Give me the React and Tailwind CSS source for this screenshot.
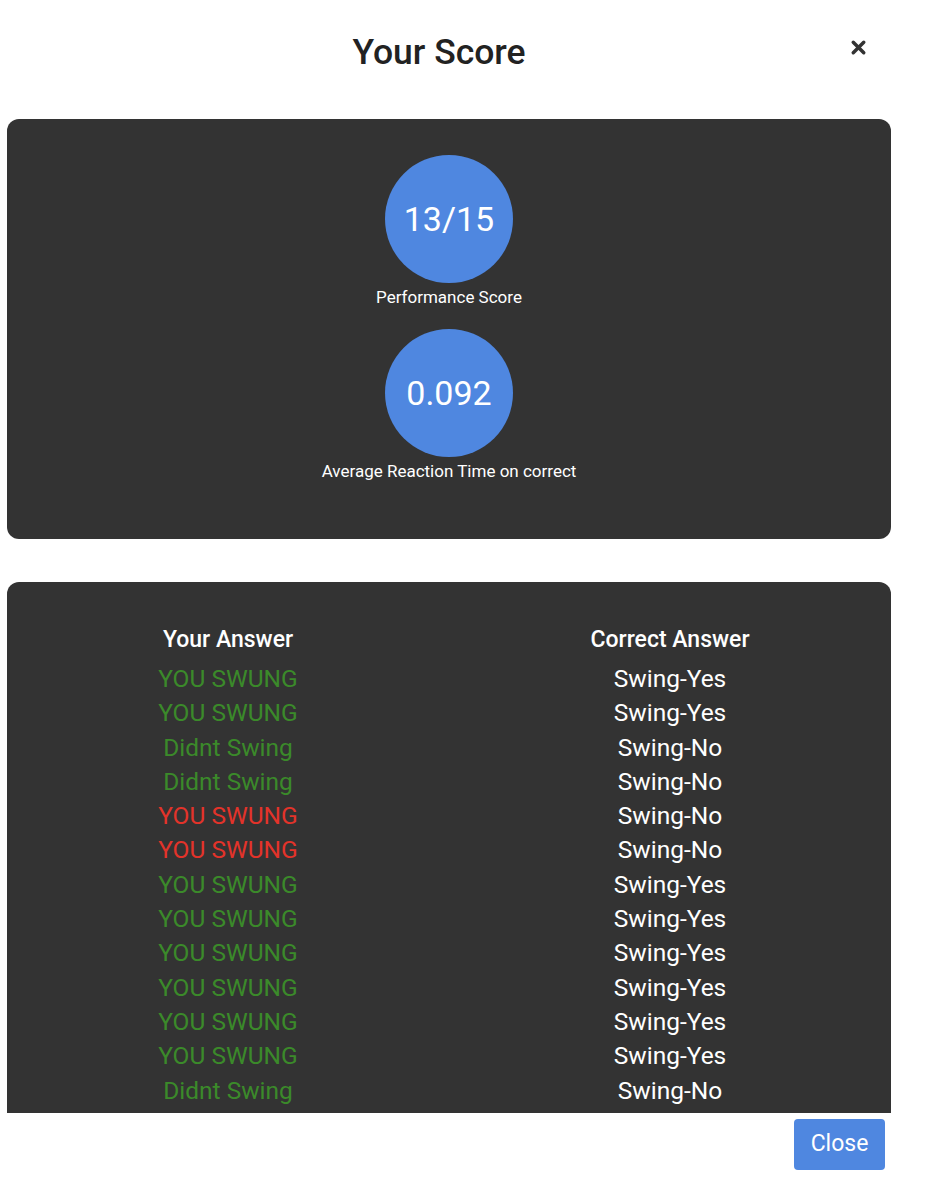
import { X } from 'lucide-react'

const rows = [
  { you: 'YOU SWUNG', ok: true, correct: 'Swing-Yes' },
  { you: 'YOU SWUNG', ok: true, correct: 'Swing-Yes' },
  { you: 'Didnt Swing', ok: true, correct: 'Swing-No' },
  { you: 'Didnt Swing', ok: true, correct: 'Swing-No' },
  { you: 'YOU SWUNG', ok: false, correct: 'Swing-No' },
  { you: 'YOU SWUNG', ok: false, correct: 'Swing-No' },
  { you: 'YOU SWUNG', ok: true, correct: 'Swing-Yes' },
  { you: 'YOU SWUNG', ok: true, correct: 'Swing-Yes' },
  { you: 'YOU SWUNG', ok: true, correct: 'Swing-Yes' },
  { you: 'YOU SWUNG', ok: true, correct: 'Swing-Yes' },
  { you: 'YOU SWUNG', ok: true, correct: 'Swing-Yes' },
  { you: 'YOU SWUNG', ok: true, correct: 'Swing-Yes' },
  { you: 'Didnt Swing', ok: true, correct: 'Swing-No' },
  { you: 'Didnt Swing', ok: true, correct: 'Swing-No' },
  { you: 'YOU SWUNG', ok: true, correct: 'Swing-Yes' },
]

const Stat = ({ value, label }) => (
  <div className="flex flex-col items-center">
    <div className="w-32 h-32 rounded-full bg-[#4f87e0] flex items-center justify-center text-white text-[34px]">
      {value}
    </div>
    <span className="mt-[2px] text-white text-[17px] leading-6">{label}</span>
  </div>
)

export default function App() {
  return (
    <div className="w-[925px] h-[1200px] bg-white font-['Roboto',sans-serif] flex flex-col">
      {/* Header */}
      <div className="h-[95px] relative flex items-center justify-center pt-[10px]">
        <h1 className="text-[35.5px] font-medium text-[#222] ml-[-47px]">Your Score</h1>
        <button className="absolute right-[56px] top-[37px] text-[#333]">
          <X size={21} strokeWidth={4} />
        </button>
      </div>

      {/* Body */}
      <div className="h-[1018px] overflow-hidden pt-6 pl-[7px] pr-[34px] flex flex-col gap-[43px]">
        <div className="h-[420px] shrink-0 rounded-xl bg-[#333333] pt-[36px] flex flex-col items-center gap-[20px]">
          <Stat value="13/15" label="Performance Score" />
          <Stat value="0.092" label="Average Reaction Time on correct" />
        </div>

        <div className="shrink-0 rounded-xl bg-[#333333] pt-[44px] pb-8">
          <div className="grid grid-cols-2 text-center">
            <div className="text-white text-[23px] font-medium leading-[28px] mb-[8px]">Your Answer</div>
            <div className="text-white text-[23px] font-medium leading-[28px] mb-[8px]">Correct Answer</div>
            {rows.map((r, i) => (
              <div key={i} className="contents">
                <div className={`text-[24.5px] leading-[34.3px] ${r.ok ? 'text-[#3b8a2a]' : 'text-[#e3332a]'}`}>{r.you}</div>
                <div className="text-[24.5px] leading-[34.3px] text-white">{r.correct}</div>
              </div>
            ))}
          </div>
        </div>
      </div>

      {/* Footer */}
      <div className="flex justify-end pr-[40px] pt-[6px]">
        <button className="w-[91px] h-[51px] rounded bg-[#4f87e0] text-white text-[23px]">Close</button>
      </div>
    </div>
  )
}
